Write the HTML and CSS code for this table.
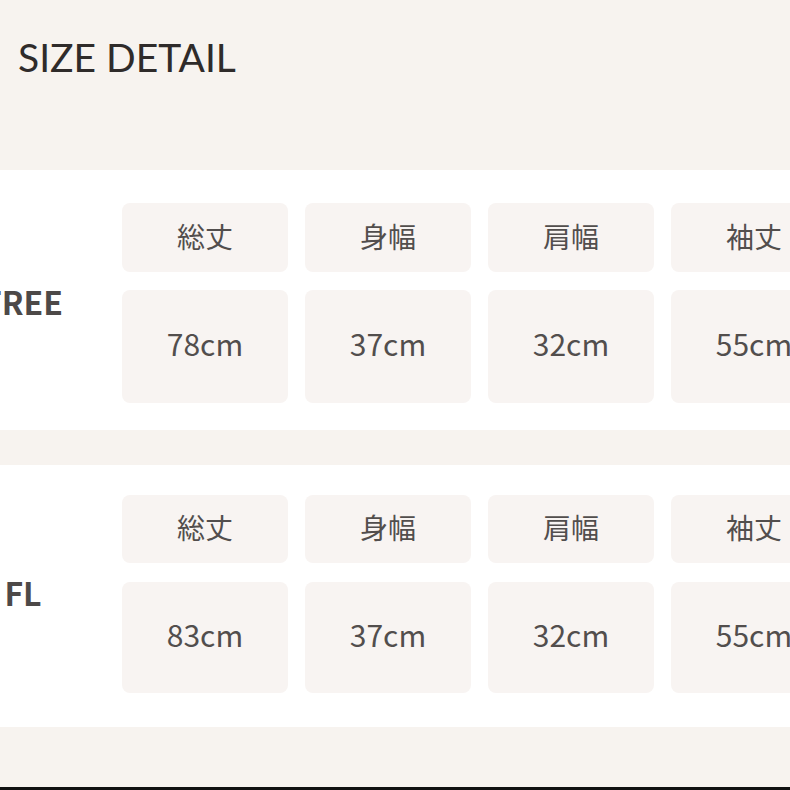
FILE: index.html
```html
<!DOCTYPE html>
<html lang="ja">
<head>
<meta charset="utf-8">
<title>SIZE DETAIL</title>
<link rel="stylesheet" href="styles.css">
</head>
<body>
<div class="page">
  <header class="head">
    <h1 class="title">SIZE DETAIL</h1>
  </header>

  <section class="block block--first">
    <div class="label">FREE</div>
    <div class="grid">
      <div class="cell cell--head">総丈</div>
      <div class="cell cell--head">身幅</div>
      <div class="cell cell--head">肩幅</div>
      <div class="cell cell--head">袖丈</div>
      <div class="cell cell--value">78cm</div>
      <div class="cell cell--value">37cm</div>
      <div class="cell cell--value">32cm</div>
      <div class="cell cell--value">55cm</div>
    </div>
  </section>

  <div class="band"></div>

  <section class="block block--second">
    <div class="label">FL</div>
    <div class="grid">
      <div class="cell cell--head">総丈</div>
      <div class="cell cell--head">身幅</div>
      <div class="cell cell--head">肩幅</div>
      <div class="cell cell--head">袖丈</div>
      <div class="cell cell--value">83cm</div>
      <div class="cell cell--value">37cm</div>
      <div class="cell cell--value">32cm</div>
      <div class="cell cell--value">55cm</div>
    </div>
  </section>

  <div class="tail"></div>
  <div class="edge"></div>
</div>
</body>
</html>
```

FILE: styles.css
```css
* { box-sizing: border-box; }

html, body {
  margin: 0;
  padding: 0;
  background: #f7f3ef;
  overflow: hidden;
}

.page {
  width: 790px;
  height: 790px;
  display: flex;
  flex-direction: column;
  overflow: hidden;
  font-family: "Noto Sans CJK JP", "Noto Sans", sans-serif;
  color: #524e4d;
}

.head {
  height: 170px;
  flex: none;
  background: #f7f3ef;
  padding: 31px 0 0 18px;
}

.title {
  margin: 0;
  font-family: Lato, "Noto Sans", sans-serif;
  font-weight: 400;
  font-size: 39px;
  line-height: 52px;
  letter-spacing: 0;
  color: #2f2b2a;
}

.block {
  flex: none;
  background: #ffffff;
  display: flex;
  align-items: center;
  padding: 33px 0 27px 0;
}

.block--second {
  padding: 30px 0 34px 0;
}

.band {
  flex: none;
  height: 35px;
  background: #f7f3ef;
}

.tail {
  flex: 1;
  background: #f7f3ef;
}

.edge {
  flex: none;
  height: 3px;
  background: #111;
}

.label {
  flex: none;
  width: 100px;
  margin-left: -27px;
  padding-bottom: 4px;
  text-align: center;
  white-space: nowrap;
  font-size: 32px;
  font-weight: 700;
  color: #4d4948;
  line-height: 1;
}

.grid {
  flex: none;
  margin-left: 49px;
  display: grid;
  grid-template-columns: repeat(4, 166px);
  grid-template-rows: 69px 113px;
  column-gap: 17px;
  row-gap: 18px;
}

.block--second .grid {
  grid-template-rows: 68px 111px;
  row-gap: 19px;
}

.cell {
  background: #f8f4f2;
  border-radius: 8px;
  display: flex;
  align-items: center;
  justify-content: center;
  color: #524e4d;
  white-space: nowrap;
}

.cell--head {
  font-size: 28px;
  font-weight: 400;
  padding-bottom: 4px;
}

.cell--value {
  font-size: 30px;
  font-weight: 400;
  padding-bottom: 8px;
}
```
